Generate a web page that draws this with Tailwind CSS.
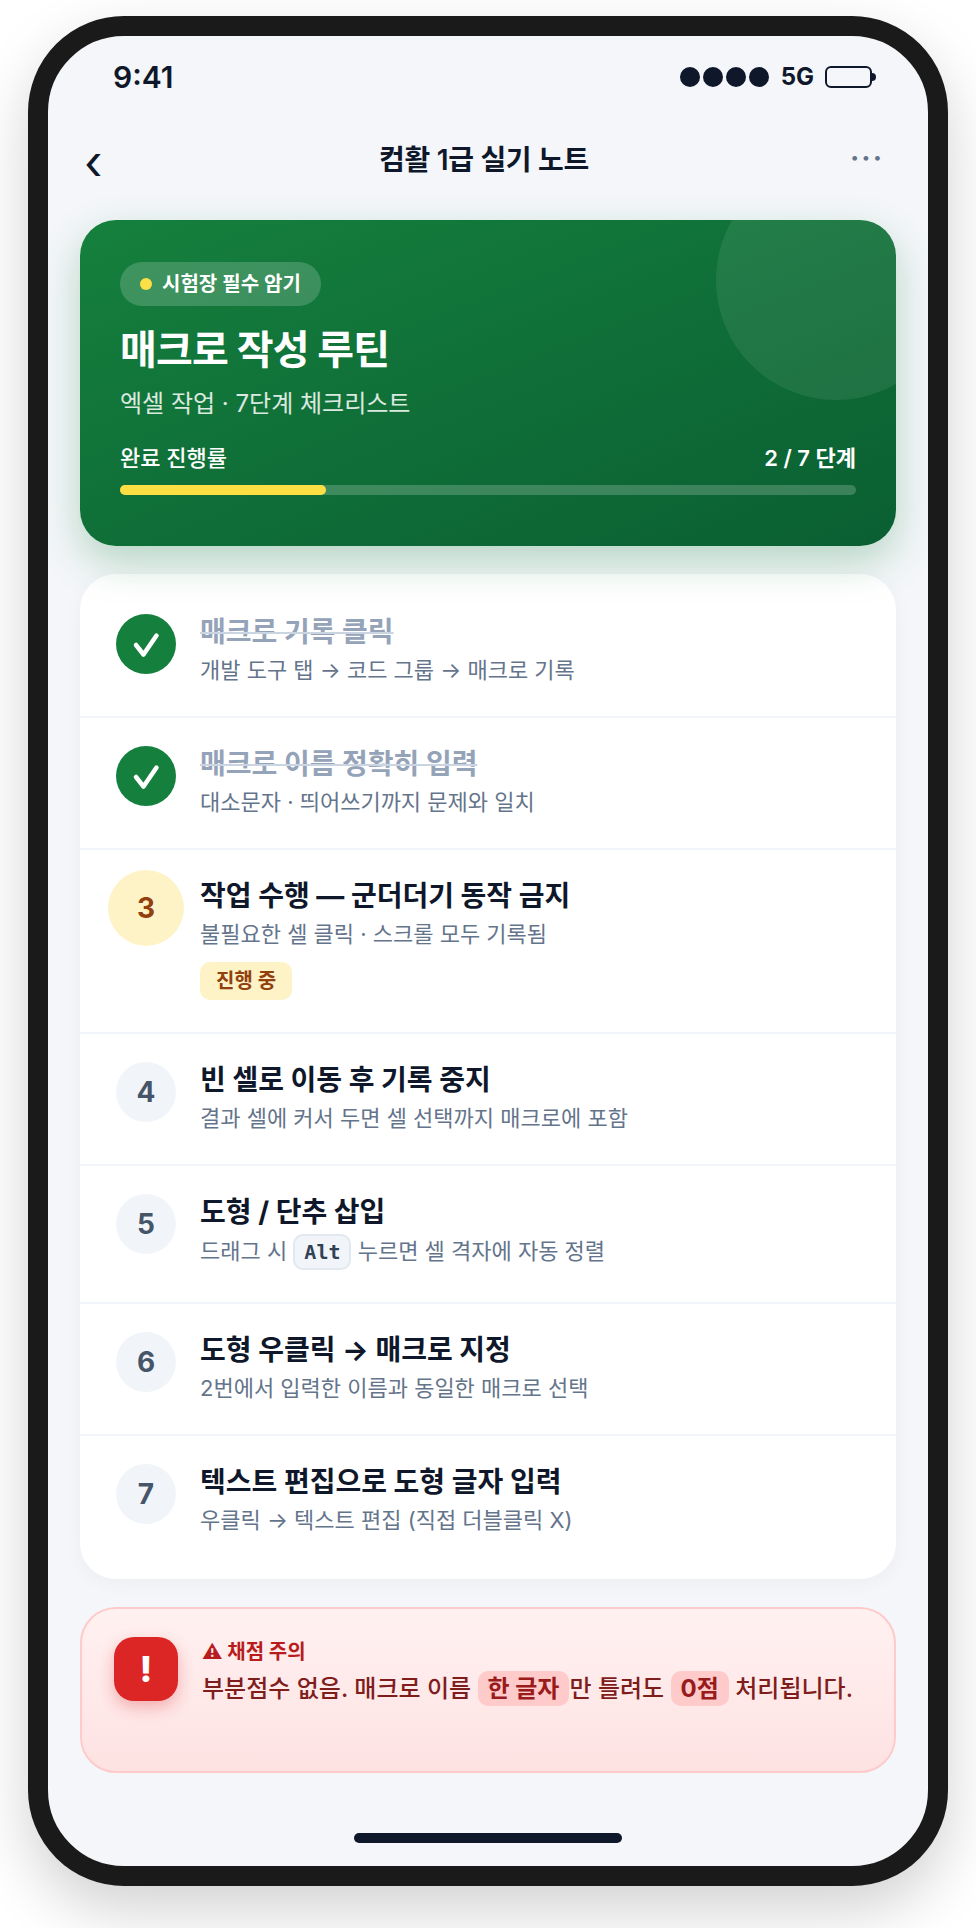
<!DOCTYPE html>
<html lang="ko">
<head>
<meta charset="utf-8">
<script src="https://cdn.jsdelivr.net/npm/@tailwindcss/browser@4"></script>
</head>
<body class="bg-white font-['Inter','Noto_Sans_CJK_KR',sans-serif] text-[#0f172a]">
<div class="w-[976px] h-[1928px] pt-4 pl-7">
  <div class="w-[920px] h-[1870px] rounded-[96px] border-[20px] border-[#1a1a1a] bg-[#f4f6f9] shadow-[0_24px_60px_rgba(0,0,0,0.18)] overflow-hidden flex flex-col">
    <div class="h-[72px] pt-[10px] pl-[65px] pr-[52px] flex items-center justify-between shrink-0">
      <span class="text-[30px] font-semibold leading-none">9:41</span>
      <div class="flex items-center">
        <div class="flex gap-[3px]">
          <span class="w-5 h-5 rounded-full bg-[#0f172a]"></span>
          <span class="w-5 h-5 rounded-full bg-[#0f172a]"></span>
          <span class="w-5 h-5 rounded-full bg-[#0f172a]"></span>
          <span class="w-5 h-5 rounded-full bg-[#0f172a]"></span>
        </div>
        <span class="ml-3 text-[24px] font-bold leading-none">5G</span>
        <div class="ml-[11px] w-[47px] h-[22px] rounded-[6px] border-2 border-[#0f172a]"></div>
        <div class="w-1 h-2 rounded-r-sm bg-[#0f172a]"></div>
      </div>
    </div>
    <div class="h-[112px] pl-[36px] pr-[44px] flex items-center justify-between shrink-0">
      <span class="text-[48px] leading-none w-12 font-normal -mt-1">‹</span>
      <span class="text-[28px] font-semibold -mt-2 -tracking-[0.3px]">컴활 1급 실기 노트</span>
      <span class="w-12 text-right text-[28px] font-bold tracking-[2px] text-[#64748b] leading-none -mt-3">···</span>
    </div>
    <div class="px-8 shrink-0">
      <section class="relative h-[326px] rounded-[36px] bg-linear-to-br from-[#15803d] to-[#0a5f32] shadow-[0_16px_40px_rgba(21,128,61,0.28)] overflow-hidden px-10 pt-[42px] text-white">
        <div class="absolute -top-[60px] -right-[60px] w-[240px] h-[240px] rounded-full bg-white/8"></div>
        <div class="relative inline-flex items-center h-11 rounded-full bg-white/18 px-5 gap-[10px]">
          <span class="w-3 h-3 rounded-full bg-[#fde047]"></span>
          <span class="text-[20px] font-semibold">시험장 필수 암기</span>
        </div>
        <h1 class="relative mt-[16px] text-[40px] font-bold leading-[56px] -tracking-[0.8px]">매크로 작성 루틴</h1>
        <p class="relative mt-[8px] text-[24px] leading-[36px] text-white/85">엑셀 작업 · 7단계 체크리스트</p>
        <div class="relative mt-[20px] flex justify-between text-[22px] font-medium leading-[32px]">
          <span>완료 진행률</span><span class="font-semibold">2 / 7 단계</span>
        </div>
        <div class="relative mt-[11px] h-[10px] rounded-full bg-white/20">
          <div class="h-full w-[28%] rounded-full bg-[#fddf43]"></div>
        </div>
      </section>

      <section class="mt-[28px] h-[1005px] rounded-[36px] bg-white overflow-hidden shadow-[0_4px_20px_rgba(15,23,42,0.04)] pt-[12px]">
        <div class="flex gap-6 pl-9 pr-8 pt-[28px] h-[132px] border-b-2 border-[#f1f5f9]">
          <div class="w-[60px] h-[60px] shrink-0 rounded-full bg-[#15803d] flex items-center justify-center">
            <svg width="60" height="60" viewBox="0 0 60 60" fill="none"><path d="M20 31l7.500 9.500L40.500 21.500" stroke="#fff" stroke-width="4.500" stroke-linecap="round" stroke-linejoin="round"/></svg>
          </div>
          <div>
            <div class="text-[28px] font-bold leading-[36px] text-[#94a3b8] line-through decoration-[#cbd5e1]">매크로 기록 클릭</div>
            <div class="mt-1 text-[22px] leading-[32px] text-[#64748b]">개발 도구 탭 → 코드 그룹 → 매크로 기록</div>
          </div>
        </div>
        <div class="flex gap-6 pl-9 pr-8 pt-[28px] h-[132px] border-b-2 border-[#f1f5f9]">
          <div class="w-[60px] h-[60px] shrink-0 rounded-full bg-[#15803d] flex items-center justify-center">
            <svg width="60" height="60" viewBox="0 0 60 60" fill="none"><path d="M20 31l7.500 9.500L40.500 21.500" stroke="#fff" stroke-width="4.500" stroke-linecap="round" stroke-linejoin="round"/></svg>
          </div>
          <div>
            <div class="text-[28px] font-bold leading-[36px] text-[#94a3b8] line-through decoration-[#cbd5e1]">매크로 이름 정확히 입력</div>
            <div class="mt-1 text-[22px] leading-[32px] text-[#64748b]">대소문자 · 띄어쓰기까지 문제와 일치</div>
          </div>
        </div>
        <div class="flex gap-6 pl-9 pr-8 pt-[28px] h-[184px] border-b-2 border-[#f1f5f9]">
          <div class="w-[60px] h-[60px] shrink-0 rounded-full bg-[#fef3c7] shadow-[0_0_0_8px_#fef3c7] flex items-center justify-center text-[28px] font-bold text-[#92400e]">3</div>
          <div>
            <div class="text-[28px] font-bold leading-[36px]">작업 수행 — 군더더기 동작 금지</div>
            <div class="mt-1 text-[22px] leading-[32px] text-[#64748b]">불필요한 셀 클릭 · 스크롤 모두 기록됨</div>
            <span class="mt-3 inline-flex items-center h-[38px] rounded-[10px] bg-[#fef3c7] px-4 text-[20px] font-semibold text-[#92400e]">진행 중</span>
          </div>
        </div>
        <div class="flex gap-6 pl-9 pr-8 pt-[28px] h-[132px] border-b-2 border-[#f1f5f9]">
          <div class="w-[60px] h-[60px] shrink-0 rounded-full bg-[#f1f5f9] flex items-center justify-center text-[28px] font-bold text-[#475569]">4</div>
          <div>
            <div class="text-[28px] font-bold leading-[36px]">빈 셀로 이동 후 기록 중지</div>
            <div class="mt-1 text-[22px] leading-[32px] text-[#64748b]">결과 셀에 커서 두면 셀 선택까지 매크로에 포함</div>
          </div>
        </div>
        <div class="flex gap-6 pl-9 pr-8 pt-[28px] h-[138px] border-b-2 border-[#f1f5f9]">
          <div class="w-[60px] h-[60px] shrink-0 rounded-full bg-[#f1f5f9] flex items-center justify-center text-[28px] font-bold text-[#475569]">5</div>
          <div>
            <div class="text-[28px] font-bold leading-[36px]">도형 / 단추 삽입</div>
            <div class="mt-1 text-[22px] leading-[32px] text-[#64748b]">드래그 시 <kbd class="inline-block rounded-[10px] border-2 border-[#e2e8f0] bg-[#f1f5f9] px-[9px] font-['DejaVu_Sans_Mono',monospace] text-[20px] font-bold leading-[32px] text-[#334155]">Alt</kbd> 누르면 셀 격자에 자동 정렬</div>
          </div>
        </div>
        <div class="flex gap-6 pl-9 pr-8 pt-[28px] h-[132px] border-b-2 border-[#f1f5f9]">
          <div class="w-[60px] h-[60px] shrink-0 rounded-full bg-[#f1f5f9] flex items-center justify-center text-[28px] font-bold text-[#475569]">6</div>
          <div>
            <div class="text-[28px] font-bold leading-[36px]">도형 우클릭 → 매크로 지정</div>
            <div class="mt-1 text-[22px] leading-[32px] text-[#64748b]">2번에서 입력한 이름과 동일한 매크로 선택</div>
          </div>
        </div>
        <div class="flex gap-6 pl-9 pr-8 pt-[28px]">
          <div class="w-[60px] h-[60px] shrink-0 rounded-full bg-[#f1f5f9] flex items-center justify-center text-[28px] font-bold text-[#475569]">7</div>
          <div>
            <div class="text-[28px] font-bold leading-[36px]">텍스트 편집으로 도형 글자 입력</div>
            <div class="mt-1 text-[22px] leading-[32px] text-[#64748b]">우클릭 → 텍스트 편집 (직접 더블클릭 X)</div>
          </div>
        </div>
      </section>

      <section class="mt-[28px] h-[166px] rounded-[36px] border-2 border-[#fecaca] bg-linear-to-b from-[#fff1f1] to-[#fee2e2] flex gap-6 pl-8 pr-8 pt-[28px]">
        <div class="w-16 h-16 shrink-0 rounded-[20px] bg-[#dc2626] shadow-[0_6px_16px_rgba(220,38,38,0.3)] flex items-center justify-center text-[36px] font-extrabold text-white">!</div>
        <div class="min-w-0">
          <div class="text-[20px] font-bold leading-[30px] text-[#b91c1c]">⚠ 채점 주의</div>
          <p class="mt-[2px] text-[24px] font-medium leading-[40px] text-[#7f1d1d]">부분점수 없음. 매크로 이름 <b class="rounded-[10px] bg-[#fecaca] px-[10px] py-[3px] font-bold text-[#991b1b]">한 글자</b>만 틀려도 <b class="rounded-[10px] bg-[#fecaca] px-[10px] py-[3px] font-bold text-[#991b1b]">0점</b> 처리됩니다.</p>
        </div>
      </section>
    </div>
    <div class="mt-[60px] mx-auto w-[268px] h-[10px] rounded-full bg-[#0f172a] shrink-0"></div>
  </div>
</div>
</body>
</html>
